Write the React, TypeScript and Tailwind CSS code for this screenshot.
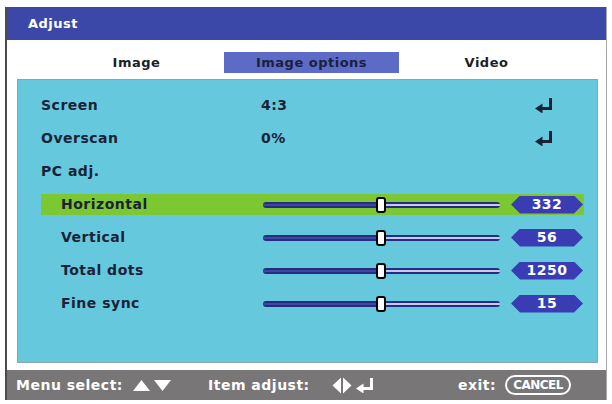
import React from 'react';

type Adj = { label: string; value: string; active?: boolean };

const ADJUSTMENTS: Adj[] = [
  { label: 'Horizontal', value: '332', active: true },
  { label: 'Vertical', value: '56' },
  { label: 'Total dots', value: '1250' },
  { label: 'Fine sync', value: '15' },
];

function EnterIcon({ color }: { color: string }) {
  return (
    <svg width="20" height="15" viewBox="0 0 20 15">
      <path d="M15 0h3v12H8V9h7z" fill={color} />
      <path d="M1 10.5L8.5 5.5v10z" fill={color} />
    </svg>
  );
}

function Slider() {
  return (
    <div className="relative w-[237px] h-[16px] flex items-center">
      <div className="w-full h-[6px] flex rounded-full overflow-hidden bg-[#262c80]">
        <div className="w-1/2 h-full flex items-center">
          <div className="w-full h-[2px] bg-[#3d47a6]" />
        </div>
        <div className="w-1/2 h-full flex items-center">
          <div className="w-full h-[2px] bg-[#c9c8f2]" />
        </div>
      </div>
      {/* knob */}
      <div className="absolute left-[113px] top-0 w-[10px] h-[16px] rounded-[3px] border-2 border-black bg-white" />
    </div>
  );
}

function Badge({ value }: { value: string }) {
  return (
    <div className="w-[72px] h-[18px] bg-[#3a3cb4] flex items-center justify-center text-white font-bold text-[14px] tracking-[0.5px] [clip-path:polygon(9px_0,calc(100%_-_9px)_0,100%_50%,calc(100%_-_9px)_100%,9px_100%,0_50%)]">
      {value}
    </div>
  );
}

export default function App() {
  return (
    <div className="w-[612px] h-[404px] bg-white pt-[7px] px-[5px] font-['DejaVu_Sans',sans-serif]">
      <div className="h-[393px] flex flex-col border-l-2 border-l-[#4c4c4c] border-r border-r-[#a8a8a8]">
        {/* title */}
        <div className="h-[33px] bg-[#3b48a8] flex items-center pl-[21px] text-white font-bold text-[13px] tracking-[0.5px]">
          Adjust
        </div>

        {/* body */}
        <div className="flex-1 flex flex-col bg-white">
          <div className="h-[39px] flex items-start pt-[12px]">
            <div className="ml-[42px] w-[525px] grid grid-cols-3 h-[21px] text-[13px] font-bold tracking-[0.5px] text-[#1e1e24]">
              <div className="flex items-center justify-center">Image</div>
              <div className="flex items-center justify-center bg-[#5b6bc6] text-[#1c1f3e]">Image options</div>
              <div className="flex items-center justify-center">Video</div>
            </div>
          </div>

          <div className="ml-[10px] mr-[8px] h-[284px] bg-[#66c8dc] border border-[#8da4ad] pt-[9px] text-[#1a2238] font-bold text-[14px] tracking-[0.5px]">
            <div className="h-[33px] flex items-center pl-[23px] pr-[43px]">
              <div className="w-[220px]">Screen</div>
              <div className="flex-1">4:3</div>
              <EnterIcon color="#1a2238" />
            </div>
            <div className="h-[33px] flex items-center pl-[23px] pr-[43px]">
              <div className="w-[220px]">Overscan</div>
              <div className="flex-1">0%</div>
              <EnterIcon color="#1a2238" />
            </div>
            <div className="h-[33px] flex items-center pl-[23px]">PC adj.</div>

            {ADJUSTMENTS.map((a) => (
              <div key={a.label} className="h-[33px] flex items-center ml-[23px] mr-[13px]">
                <div
                  className={`w-full h-[21px] flex items-center pl-[20px] pr-[1px] ${a.active ? 'bg-[#7cc832]' : ''}`}
                >
                  <div className="w-[202px]">{a.label}</div>
                  <Slider />
                  <div className="flex-1" />
                  <Badge value={a.value} />
                </div>
              </div>
            ))}
          </div>
          <div className="flex-1" />
        </div>

        {/* footer */}
        <div className="h-[30px] bg-[#787677] flex items-center text-white font-bold text-[14px] tracking-[0.5px]">
          <div className="pl-[9px] w-[126px]">Menu select:</div>
          <svg width="38" height="13" viewBox="0 0 38 13">
            <path d="M0 12L8.5 1 17 12z" fill="#fff" />
            <path d="M21 1h17l-8.5 11z" fill="#fff" />
          </svg>
          <div className="ml-[37px] w-[124px]">Item adjust:</div>
          <div className="flex items-center gap-[3px]">
            <svg width="20" height="17" viewBox="0 0 20 17">
              <path d="M9 0.5L0.5 8.5 9 16.5z" fill="#fff" />
              <path d="M11 0.5L19.5 8.5 11 16.5z" fill="#fff" />
            </svg>
            <EnterIcon color="#fff" />
          </div>
          <div className="ml-[83px]">exit:</div>
          <div className="ml-[9px] h-[20px] px-[6px] rounded-full border-2 border-white flex items-center text-[12px] tracking-[-0.5px]">
            CANCEL
          </div>
        </div>
      </div>
    </div>
  );
}
